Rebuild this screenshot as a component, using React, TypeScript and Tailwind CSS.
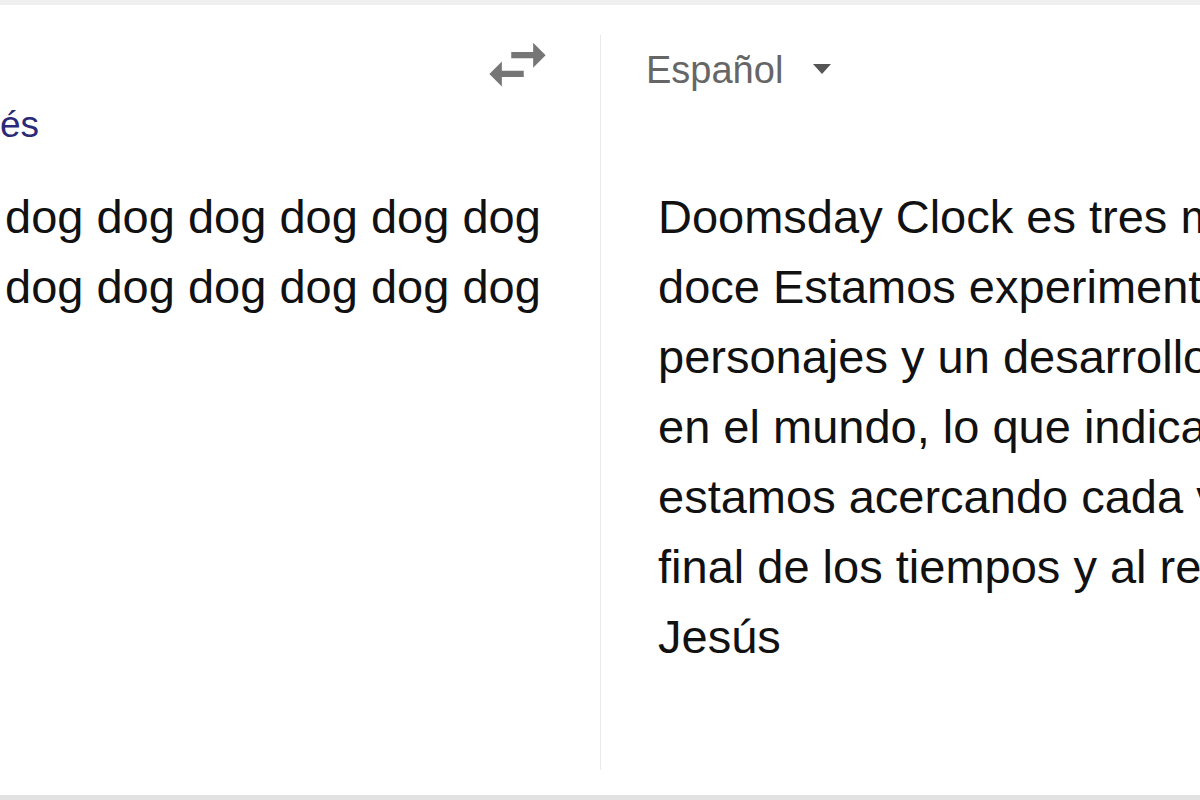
import React from "react";

const rightLines = [
  "Doomsday Clock es tres minutos para las",
  "doce Estamos experimentando muchos",
  "personajes y un desarrollo extraño",
  "en el mundo, lo que indica que nos",
  "estamos acercando cada vez más al",
  "final de los tiempos y al regreso de",
  "Jesús",
];

export default function App() {
  return (
    <div
      className="w-[1200px] h-[800px] overflow-hidden bg-white border-t-[5px] border-b-[5px] border-t-[#efefef] border-b-[#e2e2e2] flex"
      style={{ fontFamily: '"Liberation Sans", Arial, sans-serif' }}
    >
      {/* Left panel */}
      <div className="w-[600px] shrink-0 flex flex-col pt-[22px] overflow-hidden">
        <div className="flex justify-end pr-[45px]">
          <svg width="75" height="75" viewBox="0 0 24 24" fill="#767676">
            <path d="M6.99 11L3 15l3.99 4v-3H14v-2H6.99v-3zM21 9l-3.99-4v3H10v2h7.01v3L21 9z" />
          </svg>
        </div>
        <div className="mt-[1px] text-[37px] leading-[44px] text-[#2a2a78] whitespace-nowrap">
          és
        </div>
        <div className="mt-[35px] pl-[5px] text-[47px] leading-[70px] text-[#111] whitespace-nowrap">
          <div>dog dog dog dog dog dog</div>
          <div>dog dog dog dog dog dog</div>
        </div>
      </div>

      {/* Divider */}
      <div className="w-px shrink-0 bg-[#e9e9e9] mt-[30px] mb-[25px]" />

      {/* Right panel */}
      <div className="flex-1 min-w-0 flex flex-col pt-[43px] pl-[45px] overflow-hidden">
        <div className="flex items-center h-[44px] text-[38px] leading-[44px] text-[#666]">
          <span>Español</span>
          <span className="ml-[30px] mt-[-2px] w-0 h-0 border-l-[9px] border-r-[9px] border-t-[10px] border-l-transparent border-r-transparent border-t-[#555]" />
        </div>
        <div className="mt-[90px] pl-[12px] text-[47px] leading-[70px] text-[#111] whitespace-nowrap">
          {rightLines.map((l, i) => (
            <div key={i}>{l}</div>
          ))}
        </div>
      </div>
    </div>
  );
}
